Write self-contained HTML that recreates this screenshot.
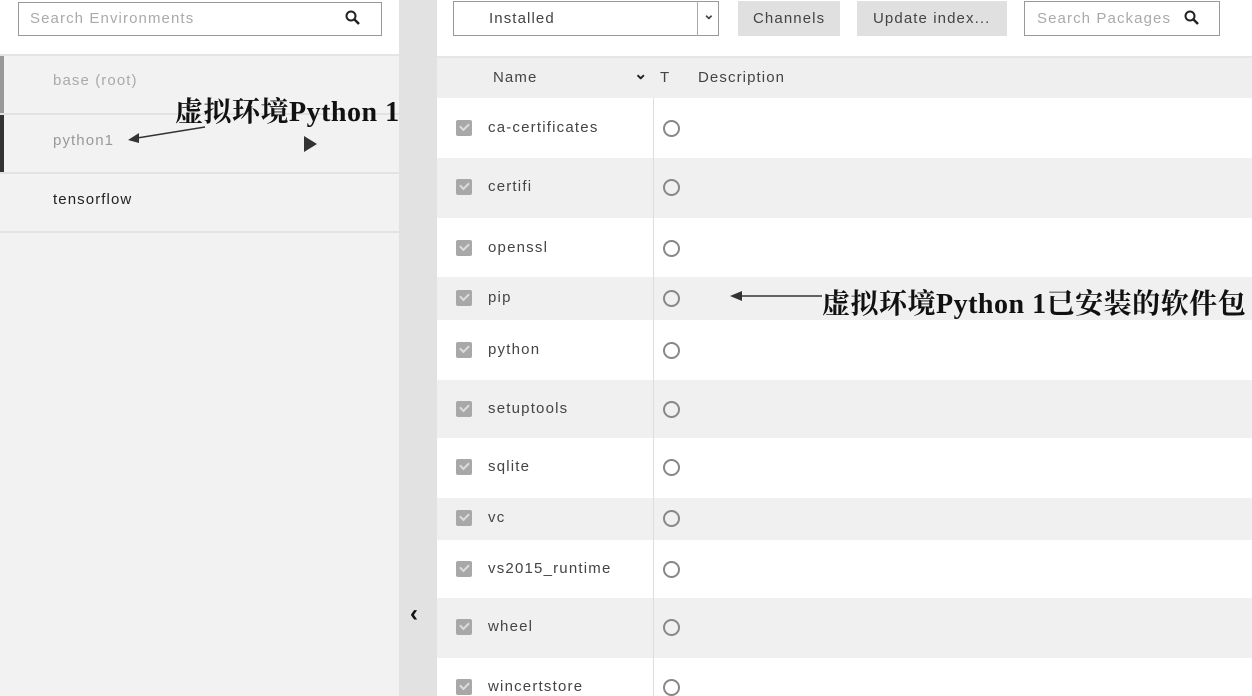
<!DOCTYPE html>
<html><head><meta charset="utf-8"><style>
*{margin:0;padding:0;box-sizing:border-box}
body{width:1252px;height:696px;overflow:hidden;background:#fff;font-family:"Liberation Sans","Noto Sans CJK SC",sans-serif;position:relative;color:#444}
.a{position:absolute}
.t{font-size:15px;letter-spacing:1.1px;color:#444}
.row{position:absolute;left:437px;width:815px}
.cb{position:absolute;left:19px;width:16px;height:16px;background:#a8a8a8;border-radius:2px}
.cb:after{content:"";position:absolute;left:4px;top:3px;width:7px;height:4px;border-left:2px solid #ddd;border-bottom:2px solid #ddd;transform:rotate(-45deg)}
.nm{position:absolute;left:51px;font-size:15px;letter-spacing:1.2px;color:#444}
.ci{position:absolute;left:226px;width:17px;height:17px;border:2px solid #888;border-radius:50%}
.cn{font-family:"Liberation Serif","Noto Serif CJK SC",serif;font-weight:bold;font-size:28px;letter-spacing:0.5px;color:#111;white-space:nowrap}
</style></head><body>
<div class="a" style="left:0;top:0;width:399px;height:696px;background:#f2f2f2"></div>
<div class="a" style="left:0;top:0;width:399px;height:54px;background:#fff"></div>
<div class="a" style="left:18px;top:2px;width:364px;height:34px;border:1px solid #999;background:#fff"></div>
<div class="a t" style="left:30px;top:10px;color:#aaa">Search Environments</div>
<svg class="a" style="left:345px;top:10px" width="16" height="16"><circle cx="6" cy="6" r="4.5" fill="none" stroke="#222" stroke-width="2"/><line x1="9" y1="9" x2="14" y2="14" stroke="#222" stroke-width="2.5"/></svg>
<div class="a" style="left:0;top:54px;width:399px;height:2px;background:#e4e4e4"></div>
<div class="a" style="left:0;top:56px;width:4px;height:57px;background:#999"></div>
<div class="a" style="left:0;top:113px;width:399px;height:2px;background:#e2e2e2"></div>
<div class="a" style="left:0;top:115px;width:4px;height:57px;background:#333"></div>
<div class="a" style="left:0;top:172px;width:399px;height:2px;background:#e2e2e2"></div>
<div class="a" style="left:0;top:231px;width:399px;height:2px;background:#e2e2e2"></div>
<div class="a t" style="left:53px;top:72px;color:#aaa">base (root)</div>
<div class="a t" style="left:53px;top:132px;color:#999">python1</div>
<div class="a t" style="left:53px;top:191px;color:#222">tensorflow</div>
<svg class="a" style="left:302px;top:135px" width="16" height="18"><polygon points="2,1 15,9 2,17" fill="#333"/></svg>
<div class="a cn" style="left:175px;top:90px">虚拟环境Python 1</div>
<svg class="a" style="left:125px;top:124px" width="90" height="20"><line x1="80" y1="3" x2="6" y2="15" stroke="#333" stroke-width="1.5"/><polygon points="3,16 14,9 14,19" fill="#333"/></svg>
<div class="a" style="left:399px;top:0;width:38px;height:696px;background:#e2e2e2"></div>
<div class="a" style="left:410px;top:600px;font-size:24px;font-weight:bold;color:#111">&lsaquo;</div>
<div class="a" style="left:453px;top:1px;width:266px;height:35px;border:1px solid #999;background:#fff"></div>
<div class="a" style="left:697px;top:1px;width:1px;height:35px;background:#aaa"></div>
<div class="a t" style="left:489px;top:10px">Installed</div>
<div class="a" style="left:703px;top:6px;font-size:14px;font-weight:bold;color:#444">&#8964;</div>
<div class="a" style="left:738px;top:1px;width:102px;height:35px;background:#e0e0e0"></div>
<div class="a t" style="left:753px;top:10px">Channels</div>
<div class="a" style="left:857px;top:1px;width:150px;height:35px;background:#e0e0e0"></div>
<div class="a t" style="left:873px;top:10px">Update index...</div>
<div class="a" style="left:1024px;top:1px;width:196px;height:35px;border:1px solid #999;background:#fff"></div>
<div class="a t" style="left:1037px;top:10px;color:#aaa">Search Packages</div>
<svg class="a" style="left:1184px;top:10px" width="16" height="16"><circle cx="6" cy="6" r="4.5" fill="none" stroke="#222" stroke-width="2"/><line x1="9" y1="9" x2="14" y2="14" stroke="#222" stroke-width="2.5"/></svg>
<div class="row" style="top:56px;height:42px;background:#efefef;border-top:2px solid #e6e6e6"></div>
<div class="a t" style="left:493px;top:69px">Name</div>
<div class="a" style="left:634px;top:64px;font-size:16px;font-weight:bold;color:#222">&#8964;</div>
<div class="a t" style="left:660px;top:69px">T</div>
<div class="a t" style="left:698px;top:69px">Description</div>
<div class="row" style="top:98px;height:60px;background:#fff"><div class="cb" style="top:22px"></div><div class="nm" style="top:21px">ca-certificates</div><div class="ci" style="top:22px"></div></div>
<div class="row" style="top:158px;height:60px;background:#f0f0f0"><div class="cb" style="top:21px"></div><div class="nm" style="top:20px">certifi</div><div class="ci" style="top:21px"></div></div>
<div class="row" style="top:218px;height:59px;background:#fff"><div class="cb" style="top:22px"></div><div class="nm" style="top:21px">openssl</div><div class="ci" style="top:22px"></div></div>
<div class="row" style="top:277px;height:43px;background:#f0f0f0"><div class="cb" style="top:13px"></div><div class="nm" style="top:12px">pip</div><div class="ci" style="top:13px"></div></div>
<div class="row" style="top:320px;height:60px;background:#fff"><div class="cb" style="top:22px"></div><div class="nm" style="top:21px">python</div><div class="ci" style="top:22px"></div></div>
<div class="row" style="top:380px;height:58px;background:#f0f0f0"><div class="cb" style="top:21px"></div><div class="nm" style="top:20px">setuptools</div><div class="ci" style="top:21px"></div></div>
<div class="row" style="top:438px;height:60px;background:#fff"><div class="cb" style="top:21px"></div><div class="nm" style="top:20px">sqlite</div><div class="ci" style="top:21px"></div></div>
<div class="row" style="top:498px;height:42px;background:#f0f0f0"><div class="cb" style="top:12px"></div><div class="nm" style="top:11px">vc</div><div class="ci" style="top:12px"></div></div>
<div class="row" style="top:540px;height:58px;background:#fff"><div class="cb" style="top:21px"></div><div class="nm" style="top:20px">vs2015_runtime</div><div class="ci" style="top:21px"></div></div>
<div class="row" style="top:598px;height:60px;background:#f0f0f0"><div class="cb" style="top:21px"></div><div class="nm" style="top:20px">wheel</div><div class="ci" style="top:21px"></div></div>
<div class="row" style="top:658px;height:38px;background:#fff"><div class="cb" style="top:21px"></div><div class="nm" style="top:20px">wincertstore</div><div class="ci" style="top:21px"></div></div>
<div class="a" style="left:653px;top:98px;width:1px;height:598px;background:#ddd"></div>
<svg class="a" style="left:728px;top:289px" width="95" height="14"><line x1="8" y1="7" x2="94" y2="7" stroke="#333" stroke-width="1.5"/><polygon points="2,7 14,2 14,12" fill="#333"/></svg>
<div class="a cn" style="left:822px;top:282px">虚拟环境Python 1已安装的软件包</div>
</body></html>
